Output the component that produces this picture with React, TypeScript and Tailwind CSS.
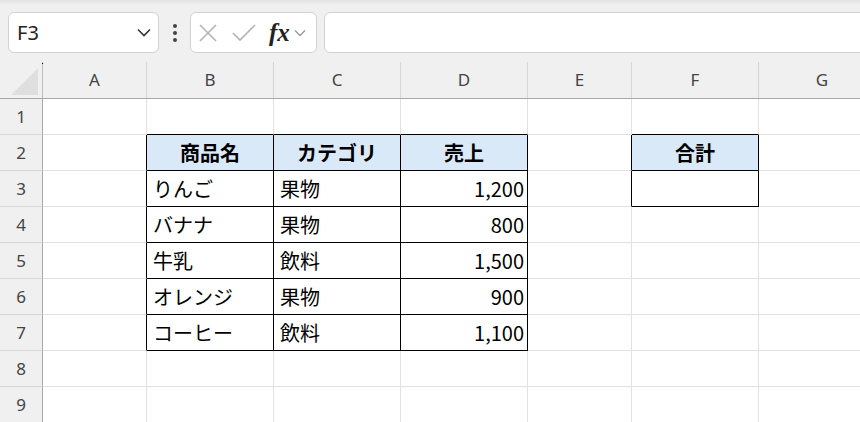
import React from "react";

const cols = [104, 127, 127, 127, 104, 127, 127];
const letters = ["A", "B", "C", "D", "E", "F", "G"];

type Cell = { t?: string; bold?: boolean; right?: boolean; center?: boolean; fill?: boolean; br?: boolean; bb?: boolean };

const data: Record<string, Cell> = {};
const setC = (r: number, c: number, v: Cell) => {
  data[`${r}-${c}`] = { ...(data[`${r}-${c}`] || {}), ...v };
};
const hdr = ["商品名", "カテゴリ", "売上"];
hdr.forEach((h, i) => setC(2, i + 1, { t: h, bold: true, center: true, fill: true, br: true, bb: true }));
const rows = [
  ["りんご", "果物", "1,200"],
  ["バナナ", "果物", "800"],
  ["牛乳", "飲料", "1,500"],
  ["オレンジ", "果物", "900"],
  ["コーヒー", "飲料", "1,100"],
];
rows.forEach((r, ri) =>
  r.forEach((v, ci) => setC(ri + 3, ci + 1, { t: v, right: ci === 2, br: true, bb: true }))
);
for (let r = 2; r <= 7; r++) setC(r, 0, { br: true });
for (let c = 1; c <= 3; c++) setC(1, c, { bb: true });
setC(1, 5, { bb: true });
setC(2, 5, { t: "合計", bold: true, center: true, fill: true, br: true, bb: true });
setC(3, 5, { br: true, bb: true });
setC(2, 4, { br: true });
setC(3, 4, { br: true });

export default function App() {
  const font = { fontFamily: '"Noto Sans", "Noto Sans CJK JP", sans-serif' };
  return (
    <div className="w-[860px] h-[422px] overflow-hidden bg-white flex flex-col" style={font}>
      {/* toolbar */}
      <div className="h-[62px] shrink-0 bg-[#f0f0f0] relative">
        <div className="absolute left-0 right-0 top-0 h-[5px] bg-gradient-to-b from-[#e2e2e2] to-[#f0f0f0]" />
        <div className="flex items-center pt-[12px] pl-[8px] gap-0 w-[1000px]">
          <div className="w-[151px] h-[41px] bg-white border border-[#d2d2d2] rounded-[6px] flex items-center pl-[8px] pr-[6px]">
            <span className="text-[20px] text-[#222] leading-none flex-1" style={{ fontFamily: '"Noto Sans", sans-serif' }}>F3</span>
            <svg width="14" height="9" viewBox="0 0 14 9" className="mr-[1px]">
              <path d="M1 1.5 L7 7.5 L13 1.5" fill="none" stroke="#333" strokeWidth="1.6" />
            </svg>
          </div>
          <div className="w-[31px] flex flex-col items-center gap-[3px]">
            <div className="w-[4px] h-[4px] bg-[#444] rounded-full" />
            <div className="w-[4px] h-[4px] bg-[#444] rounded-full" />
            <div className="w-[4px] h-[4px] bg-[#444] rounded-full" />
          </div>
          <div className="w-[127px] h-[41px] bg-white border border-[#d2d2d2] rounded-[6px] flex items-center pl-[8px]">
            <svg width="18" height="18" viewBox="0 0 18 18" className="mr-[15px]">
              <path d="M1 1 L17 17 M17 1 L1 17" stroke="#b3b3b3" strokeWidth="1.6" fill="none" />
            </svg>
            <svg width="24" height="18" viewBox="0 0 24 18" className="mr-[13px]">
              <path d="M1 9 L8 16 L23 1" stroke="#b3b3b3" strokeWidth="1.6" fill="none" />
            </svg>
            <span className="text-[25px] italic font-bold text-[#222] leading-none mr-[4px]" style={{ fontFamily: '"Liberation Serif", serif' }}>fx</span>
            <svg width="12" height="8" viewBox="0 0 12 8">
              <path d="M1 1.5 L6 6.5 L11 1.5" fill="none" stroke="#9a9a9a" strokeWidth="1.4" />
            </svg>
          </div>
          <div className="ml-[7px] w-[600px] h-[41px] bg-white border border-[#d2d2d2] rounded-[6px]" />
        </div>
      </div>
      {/* header row */}
      <div className="flex h-[37px] shrink-0 bg-[#f0f0f0] border-b border-[#a8a8a8]">
        <div className="w-[43px] shrink-0 relative border-r border-[#bdbdbd]">
          <div className="absolute right-[4px] bottom-[3px] w-0 h-0 border-l-[27px] border-l-transparent border-b-[27px] border-b-[#dfdfdf]" />
          <div className="absolute right-[-1px] top-[1px] w-[1px] h-[1px] bg-black" />
        </div>
        {cols.map((w, i) => (
          <div
            key={i}
            className="shrink-0 border-r border-[#d6d6d6] flex items-center justify-center text-[17px] text-[#444]"
            style={{ width: w }}
          >
            {letters[i]}
          </div>
        ))}
      </div>
      {/* rows */}
      {Array.from({ length: 9 }, (_, ri) => {
        const r = ri + 1;
        return (
          <div key={r} className="flex h-[36px] shrink-0">
            <div className="w-[43px] shrink-0 bg-[#f0f0f0] border-r border-[#a8a8a8] border-b border-b-[#d6d6d6] flex items-center justify-center text-[17px] text-[#444]">
              {r}
            </div>
            {cols.map((w, ci) => {
              const c = data[`${r}-${ci}`] || {};
              const cls = [
                "shrink-0 border-r border-b flex items-center text-[20px] text-black px-[5px] leading-none",
                c.br ? "border-r-black" : "border-r-[#e1e1e1]",
                c.bb ? "border-b-black" : "border-b-[#e1e1e1]",
                c.fill ? "bg-[#dae9f8]" : "",
                c.bold ? "font-bold" : "",
                c.center ? "justify-center" : c.right ? "justify-end pr-[3px]" : "justify-start pl-[6px]",
              ].join(" ");
              return (
                <div key={ci} className={cls} style={{ width: w, fontFamily: '"Noto Sans CJK JP", sans-serif' }}>
                  {c.t}
                </div>
              );
            })}
          </div>
        );
      })}
    </div>
  );
}
